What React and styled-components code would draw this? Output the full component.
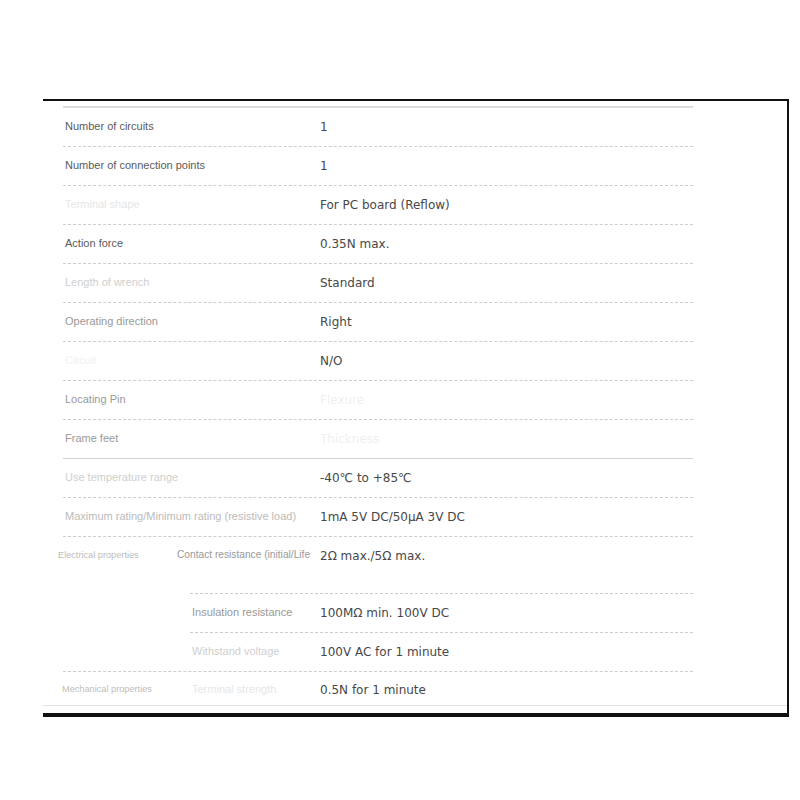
import React from "react";
import styled, { createGlobalStyle, css } from "styled-components";

const GlobalStyle = createGlobalStyle`
  html, body { margin: 0; padding: 0; background: #fff; }
  body { font-family: "Liberation Sans", Arial, sans-serif; }
`;

const tones = {
  dark: "#5a5a5a",
  mid: "#999",
  soft: "#bbb",
  light: "#cfcfcf",
  faint: "#e6e6e6",
  ghost: "#f0f0f0",
};

const Frame = styled.div`
  box-sizing: border-box;
  width: 746px;
  margin: 99px 0 0 43px;
  border-top: 2px solid #111;
  border-right: 2px solid #111;
  border-bottom: 4px solid #111;
  padding: 5px 0 7px;
`;

const SpecTable = styled.div`
  width: 630px;
  margin-left: 20px;
  border-top: 2px solid #dcdcdc;
`;

const lineStyle = (kind) => {
  if (kind === "solid") return css`border-bottom: 1px solid #cfcfcf;`;
  if (kind === "none") return css`border-bottom: none;`;
  return css`border-bottom: 1px dashed #cdcdcd;`;
};

const Row = styled.div`
  display: grid;
  grid-template-columns: ${(p) => p.$labelWidth || 255}px 1fr;
  height: ${(p) => p.$h || 38}px;
  ${(p) => lineStyle(p.$line)}
`;

const Label = styled.div`
  margin-left: ${(p) => (p.$shift !== undefined ? p.$shift : 2)}px;
  font-family: "Liberation Sans", Arial, sans-serif;
  font-size: ${(p) => p.$size || 11}px;
  line-height: ${(p) => p.$lh || 36}px;
  color: ${(p) => tones[p.$tone || "dark"]};
  white-space: nowrap;
`;

const Value = styled.div`
  padding-left: 2px;
  font-family: "DejaVu Sans", Verdana, sans-serif;
  font-size: 12px;
  line-height: ${(p) => p.$lh || 38}px;
  color: ${(p) => (p.$tone ? tones[p.$tone] : "#474747")};
  white-space: nowrap;
`;

const Group = styled.div`
  display: grid;
  grid-template-columns: 127px 1fr;
  align-items: start;
  ${(p) => lineStyle(p.$line)}
`;

const GroupLabel = styled.div`
  margin-left: ${(p) => p.$offset || 0}px;
  padding-top: ${(p) => p.$top || 13}px;
  font-family: "Liberation Sans", Arial, sans-serif;
  font-size: 9.2px;
  line-height: 11px;
  color: #bdbdbd;
  white-space: nowrap;
`;

const SubList = styled.div`
  display: flex;
  flex-direction: column;
`;

const FootLine = styled.div`
  border-bottom: 1px solid #e2e2e2;
`;

const rows = [
  ["Number of circuits", "1", "dark"],
  ["Number of connection points", "1", "dark"],
  ["Terminal shape", "For PC board (Reflow)", "faint"],
  ["Action force", "0.35N max.", "dark"],
  ["Length of wrench", "Standard", "light"],
  ["Operating direction", "Right", "mid"],
  ["Circuit", "N/O", "ghost"],
  ["Locating Pin", "Flexure", "mid", "ghost"],
  ["Frame feet", "Thickness", "mid", "ghost", "solid"],
  ["Use temperature range", "-40℃ to +85℃", "light"],
  ["Maximum rating/Minimum rating (resistive load)", "1mA 5V DC/50μA 3V DC", "soft"],
];

export default function App() {
  return (
    <>
      <GlobalStyle />
      <Frame>
        <SpecTable>
          {rows.map(([label, value, tone, vtone, line]) => (
            <Row key={label} $line={line}>
              <Label $tone={tone}>{label}</Label>
              <Value $tone={vtone}>{value}</Value>
            </Row>
          ))}
          <Group>
            <GroupLabel $offset={-5}>Electrical properties</GroupLabel>
            <SubList>
              <Row $labelWidth={128} $h={56}>
                <Label $tone="mid" $size={10.2} $shift={-13}>
                  Contact resistance (initial/Life
                </Label>
                <Value>2Ω max./5Ω max.</Value>
              </Row>
              <Row $labelWidth={128}>
                <Label $tone="mid">Insulation resistance</Label>
                <Value>100MΩ min. 100V DC</Value>
              </Row>
              <Row $labelWidth={128} $line="none">
                <Label $tone="light">Withstand voltage</Label>
                <Value>100V AC for 1 minute</Value>
              </Row>
            </SubList>
          </Group>
          <Group $line="none">
            <GroupLabel $offset={-1} $top={12}>Mechanical properties</GroupLabel>
            <SubList>
              <Row $labelWidth={128} $h={33} $line="none">
                <Label $tone="faint" $lh={35}>Terminal strength</Label>
                <Value $lh={37}>0.5N for 1 minute</Value>
              </Row>
            </SubList>
          </Group>
        </SpecTable>
        <FootLine />
      </Frame>
    </>
  );
}
